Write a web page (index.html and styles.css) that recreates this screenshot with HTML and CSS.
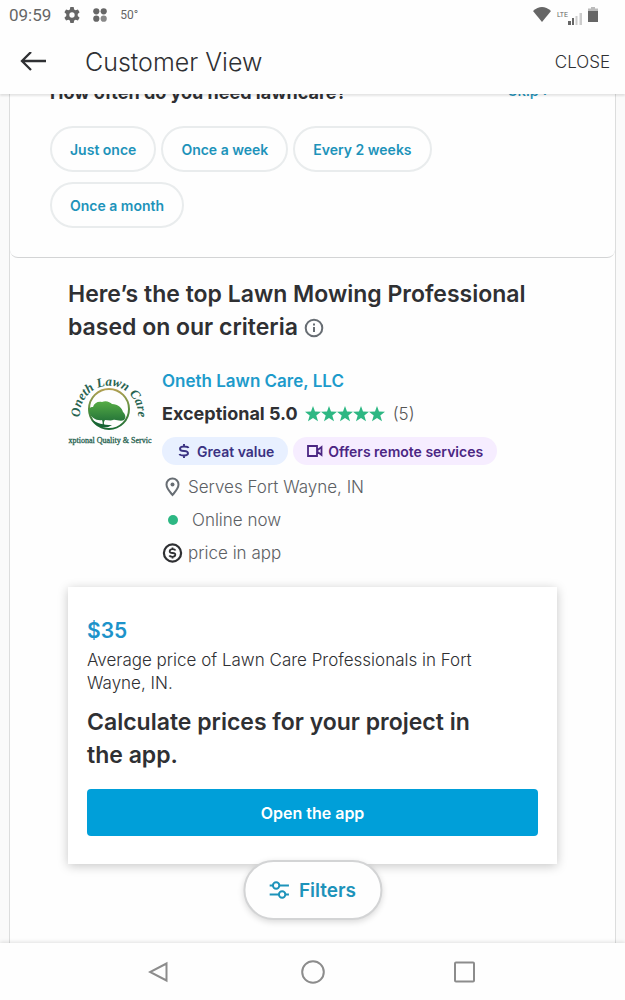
FILE: index.html
```html
<!DOCTYPE html>
<html lang="en">
<head>
<meta charset="utf-8">
<meta name="viewport" content="width=device-width, initial-scale=1">
<title>Customer View</title>
<link rel="stylesheet" href="styles.css">
</head>
<body>
<div class="screen">
  <div class="status">
    <div class="status-left">
      <span class="clock">09:59</span>
      <svg class="gear" width="16" height="16" viewBox="0 0 24 24"><path fill="#666" fill-rule="evenodd" d="M9.500 0h5l.7 3.600 2.200 1.300 3.500-1.200 2.500 4.300-2.800 2.500v3l2.800 2.500-2.500 4.300-3.500-1.200-2.200 1.300-.7 3.600h-5l-.7-3.600-2.200-1.300-3.500 1.200L.6 16l2.800-2.500v-3L.6 8l2.500-4.300 3.500 1.200 2.200-1.300zM12 8a4 4 0 1 0 0 8 4 4 0 0 0 0-8z"/></svg>
      <svg width="14" height="14" viewBox="0 0 14 14"><g fill="#666"><circle cx="3.300" cy="3.300" r="3.100"/><circle cx="10.700" cy="3.300" r="3.100"/><circle cx="3.300" cy="10.700" r="3.100"/></g><circle cx="10.700" cy="10.700" r="3.100" fill="#888"/></svg>
      <span class="temp">50°</span>
    </div>
    <div class="status-right">
      <svg width="18" height="15" viewBox="0 0 18 15"><path fill="#666" d="M0 4Q9-4 18 4L9 15z"/></svg>
      <span class="signal">
        <span class="lte">LTE</span>
        <svg width="14" height="12" viewBox="0 0 14 12"><path fill="#666" d="M0 8h3v4H0zM4 5h2v7H4z"/><path fill="#ccc" d="M7.500 3h2v9h-2zM11.500 0H14v12h-2.500z"/></svg>
      </span>
      <svg width="10" height="15" viewBox="0 0 10 15"><path fill="#bbb" d="M3 0h4v1.500h3V5H0V1.500h3z"/><path fill="#666" d="M0 4h10v11H0z"/></svg>
    </div>
  </div>

  <header class="appbar">
    <button class="back" aria-label="Back"><svg width="27" height="20" viewBox="0 0 27 20" fill="none" stroke="#2f3033" stroke-width="2.300"><path d="M26 9H2M11 0L2 9l9 9"/></svg></button>
    <h1 class="title">Customer View</h1>
    <button class="close">CLOSE</button>
  </header>

  <main class="viewport">
    <div class="sheet">
      <section class="question">
        <div class="question-head">
          <h2 class="question-title">How often do you need lawncare?</h2>
          <a class="skip" href="#results">Skip ›</a>
        </div>
        <div class="chips">
          <button class="chip">Just once</button>
          <button class="chip">Once a week</button>
          <button class="chip">Every 2 weeks</button>
          <button class="chip">Once a month</button>
        </div>
      </section>

      <section class="results" id="results">
        <h2 class="heading">Here’s the top Lawn Mowing Professional based on our criteria <svg class="info" width="20" height="20" viewBox="0 0 20 20"><circle cx="10" cy="10" r="8.300" fill="none" stroke="#676d73" stroke-width="2"/><path fill="#676d73" d="M9 9h2v5H9zM9 5.500h2v2H9z"/></svg></h2>

        <article class="pro">
          <svg class="logo" viewBox="0 0 85 85" role="img" aria-label="Oneth Lawn Care">
            <defs>
              <linearGradient id="ring" x1="0" y1="0" x2="0" y2="1"><stop offset="0" stop-color="#b3a052"/><stop offset=".5" stop-color="#5c8f40"/><stop offset="1" stop-color="#1c6b35"/></linearGradient>
              <linearGradient id="leaf" x1="0" y1="0" x2="0" y2="1"><stop offset="0" stop-color="#57ad45"/><stop offset="1" stop-color="#176536"/></linearGradient>
              <path id="arc" d="M12.500 52A29 29 0 1 1 69.500 52"/>
            </defs>
            <text class="logo-name"><textPath href="#arc" startOffset="50%" text-anchor="middle">Oneth Lawn Care</textPath></text>
            <circle cx="41" cy="41" r="20" fill="none" stroke="url(#ring)" stroke-width="2"/>
            <path fill="url(#leaf)" d="M21 44c-1-3 1-5 4-5 1-4 5-6 9-5 4-2 8 0 10 2 6 0 10 4 11 8 3 3 3 6 1 8-4 2-8-1-11 0-2 1-5 0-8 0-2 3-1 5 1 7l-5 0c2-2 2-4 1-7-5 1-11-2-13-8z"/>
            <path fill="#176536" d="M24 52c5 3 11 5 20 5-7 5-16 2-20-5z"/>
            <text class="logo-tag" x="42" y="75" text-anchor="middle">xptional Quality &amp; Servic</text>
          </svg>
          <div class="details">
            <a class="name row" href="#">Oneth Lawn Care, LLC</a>
            <div class="row rating">
              <strong>Exceptional 5.0</strong>
              <svg class="stars" width="81" height="16" viewBox="0 0 81 16" role="img" aria-label="5 stars"><defs><path id="star" fill="#2db783" d="M8 0l2 5.600 6 .2-4.700 3.700L13 15.300 8 12l-5 3.300 1.700-5.800L0 5.800l6-.2z"/></defs><use href="#star"/><use href="#star" x="16"/><use href="#star" x="32"/><use href="#star" x="48"/><use href="#star" x="64"/></svg>
              <span class="count">(5)</span>
            </div>
            <div class="badges">
              <span class="badge value"><svg width="12" height="14" viewBox="0 0 12 14" fill="none" stroke="#3a3282" stroke-width="1.900"><path d="M10.500 4Q10 2.500 6 2.500T2 4.700 6 7t4 2.300-4 2.200-4.500-1.500M6 0v2.500M6 11.500V14"/></svg>Great value</span>
              <span class="badge remote"><svg width="16" height="12" viewBox="0 0 16 12" fill="none" stroke="#4b2683" stroke-width="1.800"><path d="M1 1h9v10H1zM10 5.500L14.500 2v8L10 6.500"/></svg>Offers remote services</span>
            </div>
            <div class="row fact"><svg width="21" height="20" viewBox="0 0 21 20"><path d="M10.500 1.500a6 6 0 0 0-6 6c0 4 4 8 6 10.500 2-2.500 6-6.500 6-10.500a6 6 0 0 0-6-6z" fill="none" stroke="#676d73" stroke-width="2"/><circle cx="10.500" cy="7.500" r="2" fill="#676d73"/></svg>Serves Fort Wayne, IN</div>
            <div class="row fact online"><span class="dot"></span>Online now</div>
            <div class="row fact"><svg width="21" height="20" viewBox="0 0 21 20" fill="none" stroke="#2f3033"><circle cx="10.500" cy="10" r="8.600" stroke-width="2.200"/><path stroke-width="1.800" d="M13.500 7.500Q13 6.200 10.500 6.200T7.700 8.100t2.800 1.900 2.800 1.900-2.800 1.900-3.200-1.300M10.500 4.500v1.700M10.500 13.800v1.700"/></svg>price in app</div>
          </div>
        </article>

        <div class="card">
          <div class="price">$35</div>
          <p class="average">Average price of Lawn Care Professionals in Fort Wayne, IN.</p>
          <h3 class="calc">Calculate prices for your project in the app.</h3>
          <button class="open">Open the app</button>
        </div>
      </section>
    </div>
    <button class="filters"><svg width="20" height="18" viewBox="0 0 20 18" fill="none" stroke="#1d93ba" stroke-width="2"><path d="M0 4.500h3.500M10 4.500h9.500M0 13.500h9.500M16 13.500h3.500"/><circle cx="6.700" cy="4.500" r="3.200"/><circle cx="12.700" cy="13.500" r="3.200"/></svg>Filters</button>
  </main>

  <nav class="navbar">
    <button aria-label="Back"><svg width="24" height="24" viewBox="0 0 24 24"><path d="M18.500 3.500v17L2 12z"/></svg></button>
    <button aria-label="Home"><svg width="24" height="24" viewBox="0 0 24 24"><circle cx="12" cy="12" r="10.800"/></svg></button>
    <button aria-label="Recent apps"><svg width="24" height="24" viewBox="0 0 24 24"><rect x="1" y="2.500" width="19" height="19" rx="1"/></svg></button>
  </nav>
</div>
</body>
</html>
```
FILE: styles.css
```css
* { box-sizing: border-box; }
body { margin: 0; font-family: Inter, "Liberation Sans", sans-serif; color: #2f3033; background: #fefefe; }
h1, h2, h3, p { margin: 0; }
button { font: inherit; color: inherit; background: none; border: 0; padding: 0; cursor: pointer; }
a { text-decoration: none; }
svg { display: block; flex: none; }

.screen { height: 100vh; display: flex; flex-direction: column; overflow: hidden; }

.status { display: flex; justify-content: space-between; align-items: center; height: 29px; padding: 0 27px 0 9px; font-family: Roboto, sans-serif; color: #666; }
.status-left, .status-right { display: flex; align-items: center; }
.status-left { gap: 13px; }
.status-right { gap: 6px; }
.clock { font-size: 17px; }
.temp { font-size: 12px; }
.signal { display: flex; align-items: flex-end; }
.lte { font-size: 7px; line-height: 20px; }

.appbar { position: relative; z-index: 1; display: flex; align-items: center; height: 65px; padding: 0 15px 0 20px; background: #fefefe; box-shadow: 0 2px 2px rgba(0, 0, 0, .1); }
.title { flex: 1; margin-left: 38px; font-size: 25px; font-weight: 300; }
.close { font-size: 17px; font-weight: 300; }

.viewport { position: relative; flex: 1; min-height: 0; overflow: hidden; padding: 0 9px; background: #fafafa; }
.sheet { display: flow-root; min-height: 100%; background: #fefefe; border: 1px solid #dcdddd; border-width: 0 1px; }

.question { margin-top: -13px; padding: 0 40px 29px; border-bottom: 1px solid #d3d4d5; border-radius: 0 0 8px 8px; }
.question-head { display: flex; justify-content: space-between; align-items: flex-start; padding-right: 26px; }
.question-title { font-size: 18px; line-height: 24px; font-weight: 700; }
.skip { font-size: 15px; line-height: 19px; font-weight: 500; color: #1d93ba; }
.chips { display: flex; flex-wrap: wrap; gap: 10px 5px; padding: 21px 58px 0 0; }
.chip { height: 46px; padding: 0 18px; border: 2px solid #e9eced; border-radius: 23px; font-size: 14px; font-weight: 600; color: #1d93ba; }

.results { padding: 20px 58px 78px; }
.heading { font-size: 23px; line-height: 33px; font-weight: 600; }
.info { display: inline-block; vertical-align: -3px; }

.pro { display: flex; gap: 9px; margin-top: 20px; }
.logo { width: 85px; height: 85px; margin-top: 4px; }
.logo-name { font: bold italic 13px "Liberation Serif", serif; fill: #286350; }
.logo-tag { font: 8px "Liberation Serif", serif; fill: #286350; stroke: #286350; stroke-width: .3px; }
.details { flex: 1; min-width: 0; }
.row { display: flex; align-items: center; height: 33px; }
.name { font-size: 17px; font-weight: 600; color: #1d9bcb; }
.rating { gap: 7px; font-size: 18px; }
.rating strong { font-weight: 700; }
.count { font-size: 17px; font-weight: 300; color: #555; }
.badges { display: flex; flex-wrap: wrap; gap: 5px; padding: 7px 0 5px; }
.badge { display: flex; align-items: center; height: 28px; border-radius: 14px; font-size: 14px; font-weight: 600; white-space: nowrap; }
.value { gap: 7px; padding: 0 14px 0 16px; background: #e8f0ff; color: #3a3282; }
.remote { gap: 5px; padding: 0 14px; background: #f6edff; color: #4b2683; }
.fact { gap: 5px; font-size: 17px; font-weight: 300; color: #5c6064; }
.online { gap: 14px; padding-left: 6px; }
.dot { width: 10px; height: 10px; border-radius: 50%; background: #2db783; }

.card { margin-top: 18px; padding: 26px 19px 28px; background: #fff; box-shadow: 0 2px 10px rgba(0, 0, 0, .22); }
.price { font-size: 21px; line-height: 36px; font-weight: 600; color: #1d93ca; }
.average { padding-right: 40px; font-size: 17px; line-height: 23px; font-weight: 300; }
.calc { margin: 11px 0 17px; padding-right: 40px; font-size: 23px; line-height: 33px; font-weight: 600; }
.open { display: block; width: 100%; height: 47px; border-radius: 4px; background: #009fd9; color: #fff; font-size: 16px; font-weight: 600; }

.filters { position: absolute; left: 50%; bottom: 23px; transform: translateX(-50%); display: flex; align-items: center; gap: 10px; height: 60px; padding: 0 24px; border: 2px solid #d3d4d5; border-radius: 30px; background: #fefefe; box-shadow: 0 2px 6px rgba(0, 0, 0, .15); font-size: 19px; font-weight: 600; color: #1d93ba; }

.navbar { position: relative; display: flex; justify-content: center; align-items: center; gap: 129px; height: 57px; background: #fefefe; box-shadow: 0 -1px 4px rgba(0, 0, 0, .12); }
.navbar svg { fill: none; stroke: #8c8c8c; stroke-width: 2; }
```
